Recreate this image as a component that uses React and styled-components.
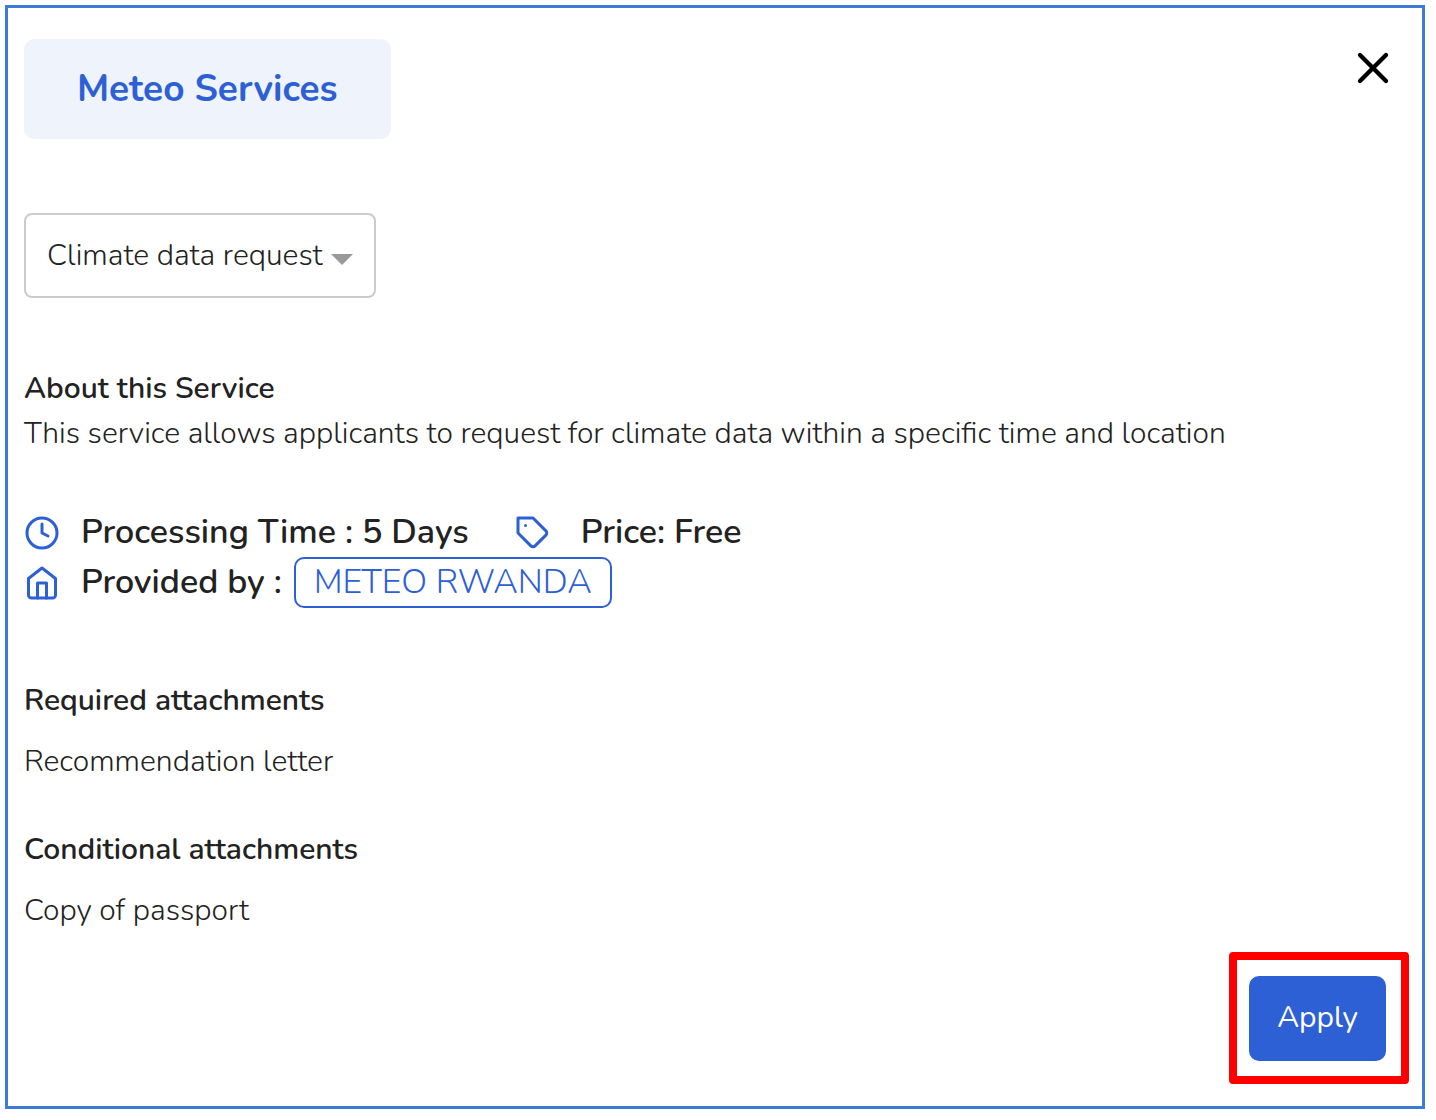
/**
*
* ServiceModal
*
*/

import React from 'react';
import styled, { createGlobalStyle } from 'styled-components';
import { FiClock, FiHome, FiTag, FiX } from 'react-icons/fi';

const blue = '#2d60d4';

const GlobalStyle = createGlobalStyle`
  * {
    box-sizing: border-box;
  }

  body {
    margin: 0;
    background-color: #fff;
    color: #222;
    font-family: Nunito, Lato, sans-serif;
    font-size: 30px;
    font-weight: 300;
    line-height: 45px;
  }

  h1, h2, p, ul {
    margin: 0;
    padding: 0;
  }

  button, select {
    font: inherit;
    cursor: pointer;
  }
`;

const Card = styled.main`
  display: flex;
  flex-direction: column;
  margin: 5px 11px 11px 5px;
  padding: 31px 13px 22px 16px;
  border: 3px solid #3d7adb;
`;

const Header = styled.header`
  display: flex;
  justify-content: space-between;
  align-items: flex-start;
`;

const Title = styled.h1`
  padding: 26px 53px;
  border-radius: 10px;
  background-color: #eef3fc;
  color: ${blue};
  font-size: 37px;
  font-weight: 700;
  line-height: 48px;
`;

const CloseButton = styled.button`
  display: flex;
  margin: 3px 10px 0 0;
  padding: 0;
  border: 0;
  background: none;
  color: #000;
  font-size: 52px;
`;

const SelectBox = styled.div`
  position: relative;
  align-self: flex-start;
  margin-top: 74px;
`;

const Select = styled.select`
  appearance: none;
  display: block;
  height: 85px;
  padding: 0 51px 0 21px;
  border: 2px solid #ccc;
  border-radius: 8px;
  background-color: #fff;
  color: #222;
`;

const Caret = styled.span`
  position: absolute;
  top: 41px;
  right: 23px;
  border: 11px solid transparent;
  border-top-color: #999;
  border-bottom: 0;
  pointer-events: none;
`;

const About = styled.section`
  margin-top: 68px;
`;

const Heading = styled.h2`
  font-size: 30px;
  font-weight: 600;
  line-height: 45px;
`;

const Details = styled.section`
  display: flex;
  flex-direction: column;
  margin: 52px 0 70px;
`;

const DetailRow = styled.div`
  display: flex;
  flex-wrap: wrap;
  align-items: center;
  min-height: 49px;
  column-gap: 46px;
`;

const Detail = styled.div`
  display: flex;
  align-items: center;
  column-gap: ${(props) => (props.$wide ? '30px' : '21px')};

  svg {
    flex: none;
    color: ${blue};
    font-size: 36px;
  }
`;

const Label = styled.span`
  font-size: 34px;
  font-weight: 600;
`;

const Agency = styled.span`
  margin-left: -9px;
  padding: 2px 18px 3px;
  border: 2px solid ${blue};
  border-radius: 10px;
  color: ${blue};
  font-size: 34px;
  line-height: 42px;
`;

const Attachments = styled.section`
  margin-bottom: ${(props) => (props.$last ? '19px' : '43px')};
`;

const AttachmentList = styled.ul`
  margin-top: 16px;
  list-style: none;
`;

const Highlight = styled.div`
  align-self: flex-end;
  padding: 16px 15px 15px 12px;
  border: 8px solid #f00;
  border-radius: 4px;
`;

const ApplyButton = styled.button`
  display: block;
  height: 85px;
  padding: 0 28px 2px;
  border: 0;
  border-radius: 10px;
  background-color: ${blue};
  color: #fff;
  font-weight: 400;
`;

export class ServiceModal extends React.Component {
  render() {
    return (
      <Card>
        <Header>
          <Title>Meteo Services</Title>
          <CloseButton type="button" aria-label="Close">
            <FiX />
          </CloseButton>
        </Header>
        <SelectBox>
          <Select aria-label="Service" defaultValue="climate">
            <option value="climate">Climate data request</option>
          </Select>
          <Caret />
        </SelectBox>
        <About>
          <Heading>About this Service</Heading>
          <p>This service allows applicants to request for climate data within a specific time and location</p>
        </About>
        <Details>
          <DetailRow>
            <Detail>
              <FiClock />
              <Label>Processing Time : 5 Days</Label>
            </Detail>
            <Detail $wide>
              <FiTag />
              <Label>Price: Free</Label>
            </Detail>
          </DetailRow>
          <DetailRow>
            <Detail>
              <FiHome />
              <Label>Provided by :</Label>
              <Agency>METEO RWANDA</Agency>
            </Detail>
          </DetailRow>
        </Details>
        <Attachments>
          <Heading>Required attachments</Heading>
          <AttachmentList>
            <li>Recommendation letter</li>
          </AttachmentList>
        </Attachments>
        <Attachments $last>
          <Heading>Conditional attachments</Heading>
          <AttachmentList>
            <li>Copy of passport</li>
          </AttachmentList>
        </Attachments>
        <Highlight>
          <ApplyButton type="button">Apply</ApplyButton>
        </Highlight>
      </Card>
    );
  }
}

export default function App() {
  return (
    <>
      <GlobalStyle />
      <ServiceModal />
    </>
  );
}
